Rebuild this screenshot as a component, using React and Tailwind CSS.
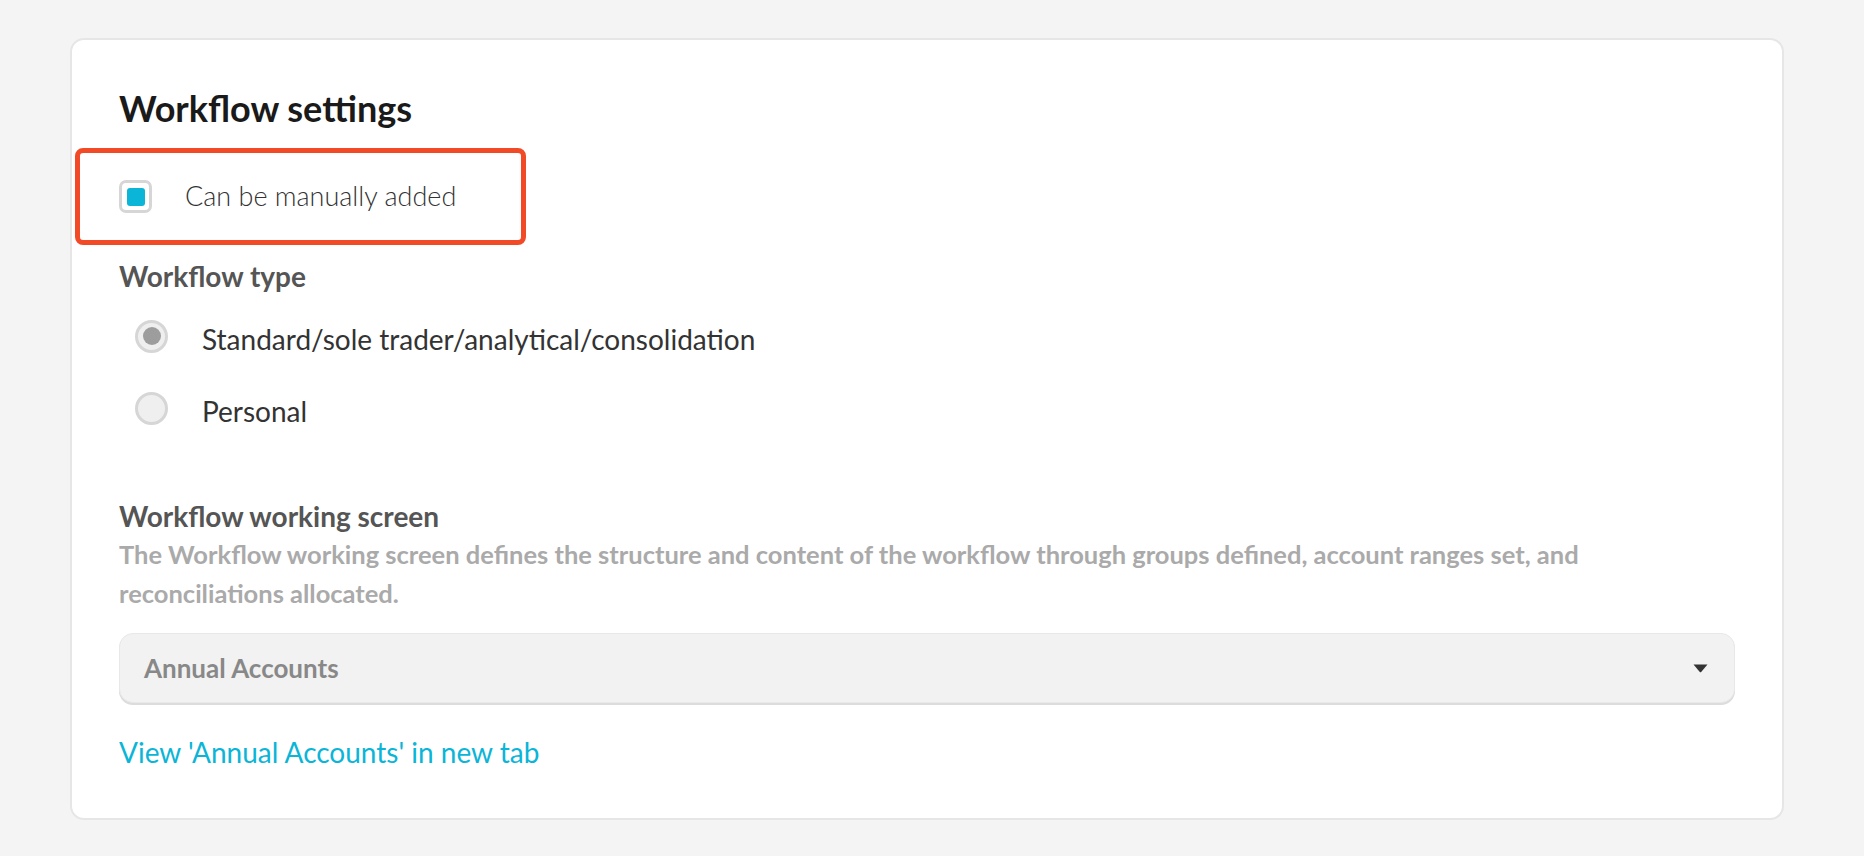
import React, { useState } from "react";

const WORKFLOW_TYPES = [
  { id: "standard", label: "Standard/sole trader/analytical/consolidation" },
  { id: "personal", label: "Personal" },
];

function Radio({ checked }) {
  return (
    <span className="flex h-[33px] w-[33px] shrink-0 items-center justify-center rounded-full border-[3px] border-[#d6d6d6] bg-[#efefef]">
      {checked && <span className="h-[18px] w-[18px] rounded-full bg-[#9d9d9d]" />}
    </span>
  );
}

export default function App() {
  const [manual, setManual] = useState(true);
  const [type, setType] = useState("standard");

  return (
    <div className="min-h-screen bg-[#f4f4f4] pl-[70px] pt-[38px] font-['Lato','Liberation_Sans',sans-serif]">
      <div className="h-[782px] w-[1714px] rounded-[14px] border-2 border-[#e6e6e6] bg-white px-[47px] pt-[48px]">
        <h1 className="text-[36px] font-bold leading-[40px] text-[#1a1a1a]">Workflow settings</h1>

        {/* checkbox row, highlighted */}
        <div className="relative mt-[20px] flex h-[97px] items-center">
          <span className="pointer-events-none absolute inset-y-0 -left-[44px] w-[451px] rounded-[8px] border-[5px] border-[#f24a26]" />
          <button
            onClick={() => setManual(!manual)}
            className="flex h-[33px] w-[33px] items-center justify-center rounded-[7px] border-[3px] border-[#d6d6d6] bg-white"
          >
            {manual && <span className="h-[18px] w-[18px] rounded-[3px] bg-[#0bb5d7]" />}
          </button>
          <span className="ml-[33px] text-[27px] font-light text-[#333]">Can be manually added</span>
        </div>

        <h2 className="mt-[15px] text-[28px] font-bold leading-[32px] text-[#555]">Workflow type</h2>
        <div className="mt-[8px]">
          {WORKFLOW_TYPES.map((t) => (
            <label
              key={t.id}
              onClick={() => setType(t.id)}
              className="flex h-[72px] cursor-pointer items-center pl-[16px]"
            >
              <Radio checked={type === t.id} />
              <span className="ml-[34px] mt-[6px] text-[28px] text-[#333]">{t.label}</span>
            </label>
          ))}
        </div>

        <h2 className="mt-[56px] text-[28px] font-bold leading-[32px] text-[#555]">Workflow working screen</h2>
        <p className="mt-[3px] max-w-[1500px] text-[25.5px] font-bold leading-[39px] text-[#aaaaaa]">
          The Workflow working screen defines the structure and content of the workflow through groups defined, account
          ranges set, and reconciliations allocated.
        </p>

        <div className="mt-[20px] flex h-[70px] items-center justify-between rounded-[14px] border border-[#e8e8e8] bg-[#f2f2f2] pl-[24px] pr-[26px] shadow-[0_2px_0_#dcdcdc]">
          <span className="text-[26px] font-bold text-[#888]">Annual Accounts</span>
          <svg width="15" height="9" viewBox="0 0 15 9">
            <path d="M0.5 0.5 H14.5 L8.2 8 Q7.5 8.7 6.8 8 Z" fill="#333" />
          </svg>
        </div>

        <a href="#" className="mt-[33px] block text-[28px] leading-[32px] text-[#0bb5d7]">
          View 'Annual Accounts' in new tab
        </a>
      </div>
    </div>
  );
}
